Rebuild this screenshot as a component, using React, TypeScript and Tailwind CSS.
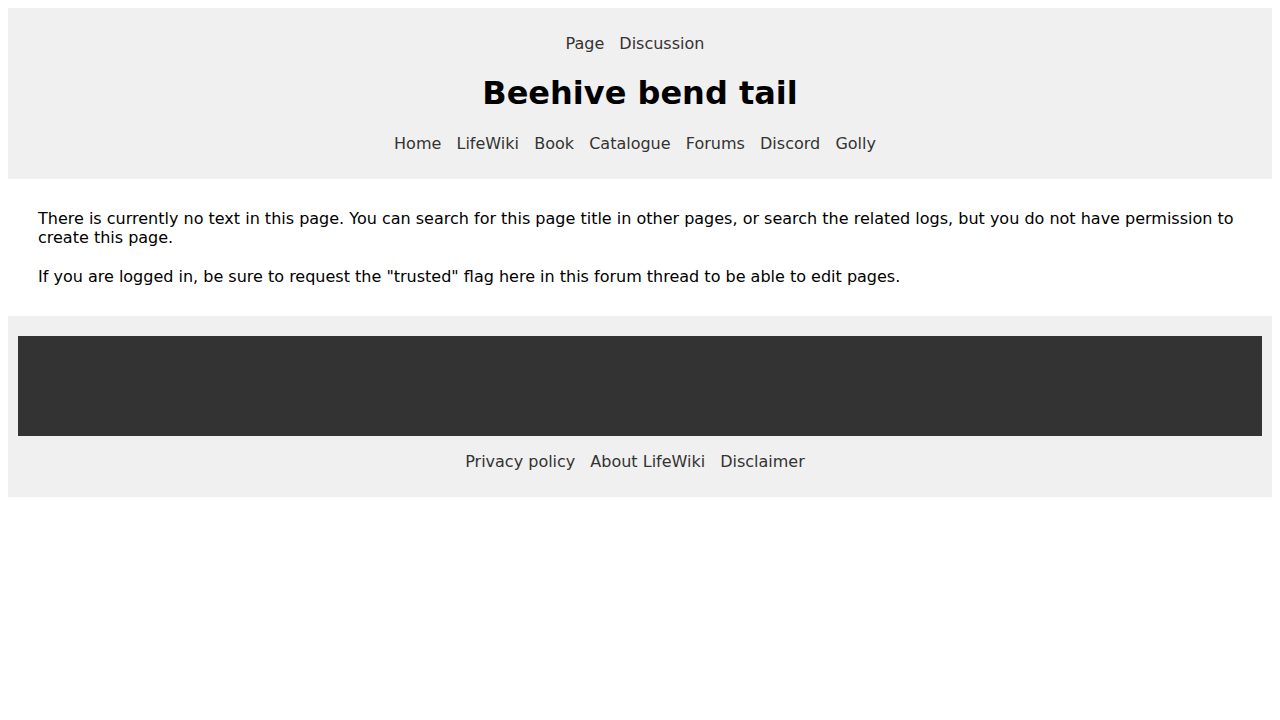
export default function App() {
  const topLinks = ['Page', 'Discussion']
  const navLinks = ['Home', 'LifeWiki', 'Book', 'Catalogue', 'Forums', 'Discord', 'Golly']
  const footLinks = ['Privacy policy', 'About LifeWiki', 'Disclaimer']

  return (
    <div className="min-h-[720px] bg-white p-2 font-['DejaVu_Sans',sans-serif] text-[16px] leading-[19px] text-black">
      <div className="bg-[#f0f0f0] pt-[26px] pb-[26px] text-center">
        <div className="flex justify-center gap-[15px] pr-[10px] text-[#333]">
          {topLinks.map(l => <a key={l} className="cursor-pointer">{l}</a>)}
        </div>
        <h1 className="mt-[22px] text-[32px] leading-[37px] font-bold">Beehive bend tail</h1>
        <div className="mt-[22px] flex justify-center gap-[15.2px] pr-[10px] text-[#333]">
          {navLinks.map(l => <a key={l} className="cursor-pointer">{l}</a>)}
        </div>
      </div>

      <div className="px-[30px] py-[30px]">
        <p>
          There is currently no text in this page. You can search for this page title in other pages, or search the related logs, but you do not have permission to create this page.
        </p>
        <p className="mt-[20px]">
          If you are logged in, be sure to request the "trusted" flag here in this forum thread to be able to edit pages.
        </p>
      </div>

      <div className="bg-[#f0f0f0] px-[10px] pt-[20px] pb-[26px]">
        <div className="h-[100px] bg-[#333]"></div>
        <div className="mt-[16px] flex justify-center gap-[15px] pr-[10px] text-[#333]">
          {footLinks.map(l => <a key={l} className="cursor-pointer">{l}</a>)}
        </div>
      </div>
    </div>
  )
}
